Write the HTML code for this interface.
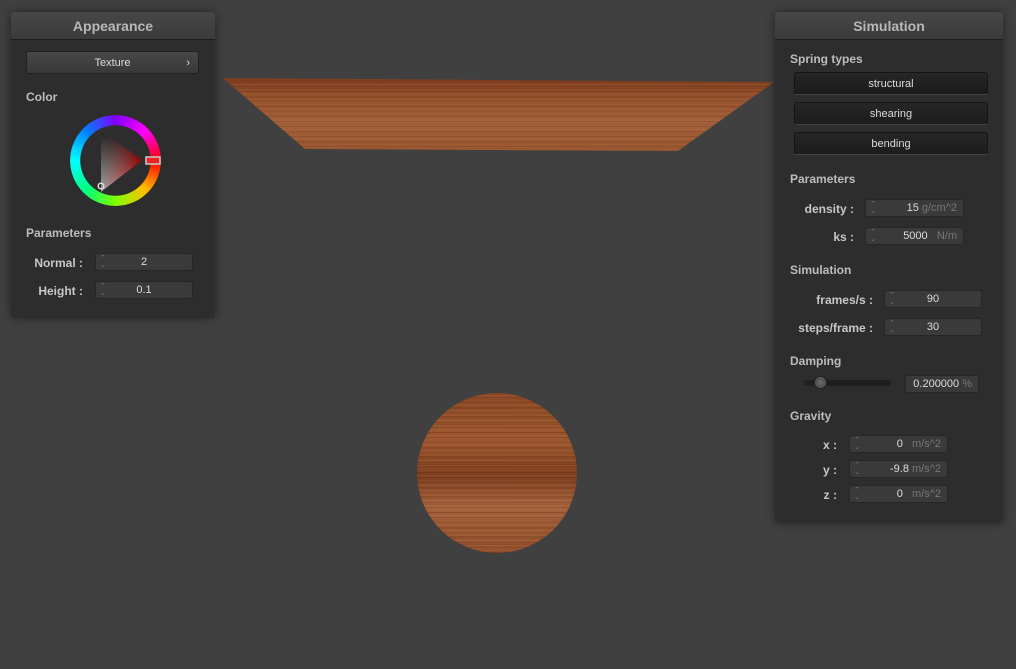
<!DOCTYPE html>
<html><head><meta charset="utf-8"><style>
*{margin:0;padding:0;box-sizing:border-box}
body{width:1016px;height:669px;background:#404040;position:relative;overflow:hidden;font-family:"Liberation Sans",sans-serif;color:#d8d8d8}
.panel{position:absolute;background:#2d2d2d;box-shadow:0 0 10px rgba(0,0,0,.45);border-radius:3px}
.title{height:28px;background:linear-gradient(#474747,#3b3b3b);border-bottom:1px solid #1e1e1e;text-align:center;font-size:14px;font-weight:bold;line-height:29px;color:#b8b8b8;border-radius:3px 3px 0 0}
.lbl{position:absolute;font-size:12px;font-weight:bold;color:#bdbdbd}
.rl{position:absolute;font-size:12px;font-weight:bold;color:#c8c8c8;text-align:right}
.box{position:absolute;height:18px;background:#3a3a3a;border:1px solid #262626;border-radius:3px;font-size:11px;color:#ddd;line-height:17px}
.box .sp{position:absolute;left:4px;top:1px;font-size:7px;color:#777;line-height:7px}
.box .v{position:absolute;right:6px;top:0}
.box .c{position:absolute;left:0;right:0;text-align:center}
.u{color:#777}
.btn{position:absolute;height:23px;background:linear-gradient(#262626,#1c1c1c);border:1px solid #151515;border-bottom-color:#444;border-radius:3px;text-align:center;font-size:11px;line-height:23px;color:#ddd}
.wood{background:
repeating-linear-gradient(0deg,rgba(70,25,8,.12) 0 1px,transparent 1px 2px,rgba(220,140,85,.08) 2px 3px,transparent 3px 5px),
repeating-linear-gradient(0deg,rgba(80,30,10,.1) 0 1px,transparent 1px 4px,rgba(200,120,70,.1) 4px 5px,transparent 5px 9px),
linear-gradient(180deg,#7a3a1c,#93502c 25%,#a3603a 60%,#97552f)}
</style></head><body>

<div class="wood" style="position:absolute;left:223px;top:77px;width:551px;height:75px;clip-path:polygon(0 1px,551px 5px,455px 74px,82px 72px)"></div>

<div style="position:absolute;left:417px;top:393px;width:160px;height:160px;border-radius:50%;background:
radial-gradient(circle at 50% 50%,transparent 65%,rgba(40,15,5,.15) 100%),
repeating-linear-gradient(0deg,rgba(60,20,5,.14) 0 1px,transparent 1px 2px,rgba(230,150,90,.1) 2px 3px,transparent 3px 5px),
repeating-linear-gradient(0deg,rgba(80,30,10,.12) 0 1px,transparent 1px 4px,rgba(200,120,70,.12) 4px 5px,transparent 5px 8px),
linear-gradient(180deg,#8a4825,#9c5830 30%,#7d3e1f 52%,#a4623d 70%,#92502c)"></div>

<!-- left panel -->
<div class="panel" style="left:11px;top:12px;width:204px;height:306px">
<div class="title">Appearance</div>
<div class="btn" style="left:15px;top:39px;width:173px;background:linear-gradient(#474747,#393939);border-color:#222">Texture<span style="position:absolute;right:8px">›</span></div>
<div class="lbl" style="left:15px;top:78px">Color</div>
<div style="position:absolute;left:59px;top:103px;width:91px;height:91px;border-radius:50%;background:conic-gradient(#8000ff,#ff00ff 45deg,#f00 90deg,#ffbf00 135deg,#80ff00 180deg,#00ff80 225deg,#0ff 270deg,#0080ff 315deg,#8000ff);-webkit-mask:radial-gradient(circle,transparent 35px,#000 35.5px);mask:radial-gradient(circle,transparent 35px,#000 35.5px)"></div>
<svg style="position:absolute;left:59px;top:103px" width="92" height="92" viewBox="0 0 92 92">
<defs>
<linearGradient id="tg" x1="0" y1="0" x2="1" y2="0"><stop offset="0" stop-color="#fff" stop-opacity=".55"/><stop offset="1" stop-color="#f00"/></linearGradient>
<linearGradient id="tk" x1="0" y1="0" x2="0" y2="1"><stop offset="0" stop-color="#000" stop-opacity=".8"/><stop offset="1" stop-color="#000" stop-opacity="0"/></linearGradient>
</defs>
<polygon points="31,16 72,45 31,77" fill="url(#tg)"/>
<polygon points="31,16 72,45 31,77" fill="url(#tk)"/>
<rect x="76" y="42" width="14" height="7" fill="#e22" stroke="#ccc" stroke-width="1.5"/>
<circle cx="31" cy="71" r="2.8" fill="none" stroke="#ddd" stroke-width="1.5"/>
</svg>
<div class="lbl" style="left:15px;top:214px">Parameters</div>
<div class="rl" style="left:0;width:72px;top:244px">Normal :</div>
<div class="box" style="left:84px;top:241px;width:98px"><span class="sp">⌃<br>⌄</span><span class="c">2</span></div>
<div class="rl" style="left:0;width:72px;top:272px">Height :</div>
<div class="box" style="left:84px;top:269px;width:98px"><span class="sp">⌃<br>⌄</span><span class="c">0.1</span></div>
</div>

<!-- right panel -->
<div class="panel" style="left:775px;top:12px;width:228px;height:511px">
<div class="title">Simulation</div>
<div class="lbl" style="left:15px;top:40px">Spring types</div>
<div class="btn" style="left:19px;top:60px;width:194px">structural</div>
<div class="btn" style="left:19px;top:90px;width:194px">shearing</div>
<div class="btn" style="left:19px;top:120px;width:194px">bending</div>
<div class="lbl" style="left:15px;top:160px">Parameters</div>
<div class="rl" style="left:0;width:79px;top:190px">density :</div>
<div class="box" style="left:90px;top:187px;width:99px"><span class="sp">⌃<br>⌄</span><span class="v">15 <span class="u">g/cm^2</span></span></div>
<div class="rl" style="left:0;width:79px;top:218px">ks :</div>
<div class="box" style="left:90px;top:215px;width:99px"><span class="sp">⌃<br>⌄</span><span class="v">5000 &nbsp; <span class="u">N/m</span></span></div>
<div class="lbl" style="left:15px;top:251px">Simulation</div>
<div class="rl" style="left:0;width:98px;top:281px">frames/s :</div>
<div class="box" style="left:109px;top:278px;width:98px"><span class="sp">⌃<br>⌄</span><span class="c">90</span></div>
<div class="rl" style="left:0;width:98px;top:309px">steps/frame :</div>
<div class="box" style="left:109px;top:306px;width:98px"><span class="sp">⌃<br>⌄</span><span class="c">30</span></div>
<div class="lbl" style="left:15px;top:342px">Damping</div>
<div style="position:absolute;left:29px;top:368px;width:87px;height:6px;background:#1f1f1f;border-radius:3px"></div>
<div style="position:absolute;left:40px;top:365px;width:11px;height:11px;background:#666;border-radius:50%;box-shadow:inset 0 0 0 3px #555,0 0 0 1px #222"></div>
<div class="box" style="left:130px;top:363px;width:74px"><span class="v">0.200000 <span class="u">%</span></span></div>
<div class="lbl" style="left:15px;top:397px">Gravity</div>
<div class="rl" style="left:0;width:62px;top:426px">x :</div>
<div class="box" style="left:74px;top:423px;width:99px"><span class="sp">⌃<br>⌄</span><span class="v">0 &nbsp; <span class="u">m/s^2</span></span></div>
<div class="rl" style="left:0;width:62px;top:451px">y :</div>
<div class="box" style="left:74px;top:448px;width:99px"><span class="sp">⌃<br>⌄</span><span class="v">-9.8 <span class="u">m/s^2</span></span></div>
<div class="rl" style="left:0;width:62px;top:476px">z :</div>
<div class="box" style="left:74px;top:473px;width:99px"><span class="sp">⌃<br>⌄</span><span class="v">0 &nbsp; <span class="u">m/s^2</span></span></div>
</div>
</body></html>
